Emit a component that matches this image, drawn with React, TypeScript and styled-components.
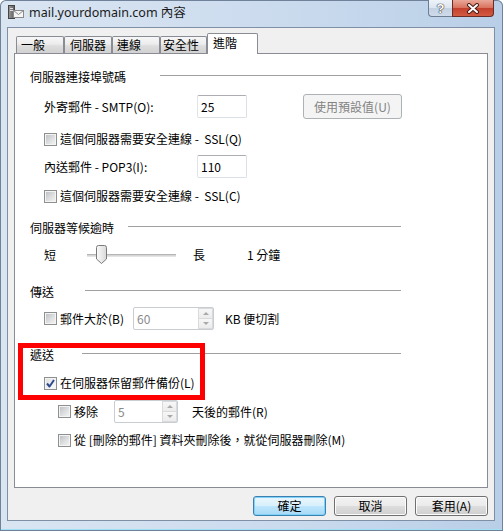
import React from "react";
import styled, { createGlobalStyle } from "styled-components";

const GlobalStyle = createGlobalStyle`
  html, body {
    margin: 0;
    padding: 0;
  }
  body {
    width: 503px;
    height: 531px;
    overflow: hidden;
    background: #fff;
    font-family: "Noto Sans CJK TC", "Noto Sans", sans-serif;
    font-size: 12px;
    color: #000;
  }
`;

const Window = styled.div`
  width: 503px;
  height: 531px;
  box-sizing: border-box;
  display: flex;
  flex-direction: column;
  padding: 0 8px 10px 7px;
  border-radius: 6px 6px 0 0;
  background: linear-gradient(to right, #dae5f2 0%, #cbdbee 55%, #b9cfe7 100%);
  box-shadow: inset 0 0 0 1px #6f829a, inset 0 -3px 0 -1px #9fe0f5;
`;

const TitleBar = styled.div`
  height: 27px;
  flex-shrink: 0;
  display: flex;
  align-items: flex-start;
`;

const TitleIcon = styled.div`
  width: 16px;
  height: 16px;
  margin: 4px 0 0 1px;
`;

const TitleText = styled.div`
  margin: 5px 0 0 5px;
  line-height: 16px;
  font-size: 12.5px;
  font-family: "Noto Sans", "Noto Sans CJK TC", sans-serif;
  color: #1a1a1a;
  white-space: nowrap;
`;

const CaptionButtons = styled.div`
  margin-left: auto;
  margin-right: 1px;
  display: flex;
`;

const HelpButton = styled.div`
  width: 24px;
  height: 17px;
  box-sizing: border-box;
  border: 1px solid #6d7d92;
  border-top: none;
  border-right: none;
  border-radius: 0 0 0 4px;
  background: linear-gradient(#eef3f9 0%, #dbe4ef 50%, #c3d1e2 52%, #cfdbea 100%);
  display: flex;
  align-items: center;
  justify-content: center;
  font-family: "Liberation Sans", sans-serif;
  font-weight: bold;
  font-size: 13px;
  color: #fff;
  text-shadow: 0 0 1px #333, 0 0 1px #333, 0 0 1px #333;
`;

const CloseButton = styled.div`
  width: 42px;
  height: 17px;
  box-sizing: border-box;
  border: 1px solid #6a2c24;
  border-top: none;
  border-radius: 0 0 4px 0;
  background: linear-gradient(#e9a899 0%, #d9735f 48%, #c3402c 52%, #d35b42 100%);
  display: flex;
  align-items: center;
  justify-content: center;
`;

const Client = styled.div`
  flex: 1;
  display: flex;
  flex-direction: column;
  background: #f0f0f0;
  border: 1px solid #7f90a6;
  padding: 5px 6px 0 6px;
`;

const TabStrip = styled.div`
  display: flex;
  align-items: flex-end;
  height: 21px;
  margin: 0 0 -1px 2px;
  position: relative;
  z-index: 2;
`;

const Tab = styled.div<{ $active?: boolean; $w: number; $pad: number }>`
  width: ${(p) => p.$w}px;
  box-sizing: border-box;
  height: ${(p) => (p.$active ? 21 : 17)}px;
  margin-bottom: ${(p) => (p.$active ? 0 : 1)}px;
  padding: 0 0 ${(p) => (p.$active ? 3 : 0)}px ${(p) => p.$pad}px;
  border: 1px solid #898c95;
  border-bottom: none;
  border-radius: 2px 2px 0 0;
  background: ${(p) =>
    p.$active
      ? "#fff"
      : "linear-gradient(#f7f7f7 0%, #ececec 45%, #dddddd 55%, #d2d2d2 100%)"};
  display: flex;
  align-items: center;
  line-height: 16px;
  white-space: nowrap;
`;

const Panel = styled.div`
  position: relative;
  z-index: 1;
  height: 435px;
  box-sizing: border-box;
  background: #fff;
  border: 1px solid #898c95;
  padding-left: 15px;
  display: flex;
  flex-direction: column;
`;

const GroupHeader = styled.div<{ $mt: number }>`
  display: flex;
  align-items: center;
  width: 371px;
  height: 16px;
  margin-top: ${(p) => p.$mt}px;
  flex-shrink: 0;
`;

const GroupLabel = styled.div<{ $w: number }>`
  width: ${(p) => p.$w}px;
  flex-shrink: 0;
  line-height: 16px;
  white-space: nowrap;
`;

const GroupLine = styled.div`
  flex: 1;
  height: 1px;
  margin-bottom: 4px;
  background: #a0a0a0;
`;

const Row = styled.div<{ $mt: number; $h: number; $indent: number }>`
  display: flex;
  align-items: center;
  height: ${(p) => p.$h}px;
  margin-top: ${(p) => p.$mt}px;
  margin-left: ${(p) => p.$indent}px;
  flex-shrink: 0;
`;

const FieldLabel = styled.div<{ $w?: number; $ml?: number }>`
  ${(p) => (p.$w ? `width: ${p.$w}px; flex-shrink: 0;` : "")}
  margin-left: ${(p) => p.$ml ?? 0}px;
  line-height: 16px;
  white-space: nowrap;
`;

const TextBox = styled.div<{ $w: number }>`
  width: ${(p) => p.$w}px;
  height: 23px;
  box-sizing: border-box;
  border: 1px solid #dbdfe6;
  border-top-color: #abadb3;
  border-left-color: #e2e3ea;
  border-radius: 2px;
  padding-left: 3px;
  display: flex;
  align-items: center;
  line-height: 16px;
  background: #fff;
`;

const DisabledButton = styled.div<{ $ml: number }>`
  margin-left: ${(p) => p.$ml}px;
  width: 99px;
  height: 25px;
  box-sizing: border-box;
  border: 1px solid #adb2b5;
  border-radius: 3px;
  background: #f4f4f4;
  color: #838383;
  display: flex;
  align-items: center;
  justify-content: center;
  line-height: 16px;
`;

const CheckBox = styled.div<{ $checked?: boolean }>`
  width: 13px;
  height: 13px;
  box-sizing: border-box;
  flex-shrink: 0;
  border: 1px solid #8e8f8f;
  box-shadow: inset 0 0 0 1px #f4f4f4;
  background: ${(p) =>
    p.$checked
      ? "linear-gradient(135deg, #dcdcdc 0%, #f2f2f2 60%, #fbfbfb 100%)"
      : "linear-gradient(135deg, #b9bcc0 0%, #dedfe0 55%, #f6f6f6 100%)"};
  display: flex;
  align-items: center;
  justify-content: center;
`;

const CheckText = styled.div<{ $w?: number }>`
  margin-left: 3px;
  ${(p) => (p.$w ? `width: ${p.$w}px; flex-shrink: 0;` : "")}
  line-height: 16px;
  white-space: nowrap;
`;

const SliderTrack = styled.div`
  position: relative;
  width: 89px;
  height: 3px;
  box-sizing: border-box;
  border-top: 1px solid #b5b5b5;
  border-bottom: 1px solid #e4e4e4;
  background: #d6d6d6;
  flex-shrink: 0;
`;

const SliderThumb = styled.svg`
  position: absolute;
  left: 9px;
  top: -10px;
`;

const SpinBox = styled.div<{ $w: number }>`
  width: ${(p) => p.$w}px;
  height: 23px;
  box-sizing: border-box;
  border: 1px solid #c9ccd1;
  border-radius: 2px;
  background: #fff;
  display: flex;
  align-items: stretch;
  flex-shrink: 0;
`;

const SpinValue = styled.div`
  flex: 1;
  padding-left: 3px;
  display: flex;
  align-items: center;
  color: #8a8a8a;
  line-height: 16px;
`;

const SpinButtons = styled.div`
  width: 15px;
  display: flex;
  flex-direction: column;
`;

const SpinHalf = styled.div<{ $down?: boolean }>`
  flex: 1;
  box-sizing: border-box;
  border: 1px solid #d9dadc;
  ${(p) => (p.$down ? "border-top: none;" : "")}
  background: linear-gradient(#f7f7f7, #ececec);
  display: flex;
  align-items: center;
  justify-content: center;
`;

const Arrow = styled.div<{ $down?: boolean }>`
  width: 0;
  height: 0;
  border-left: 3px solid transparent;
  border-right: 3px solid transparent;
  ${(p) =>
    p.$down ? "border-top: 3px solid #a9a9a9;" : "border-bottom: 3px solid #a9a9a9;"}
`;

const DeliverySection = styled.div`
  position: relative;
  display: flex;
  flex-direction: column;
`;

const Highlight = styled.div`
  position: absolute;
  left: -12px;
  top: 13px;
  width: 187px;
  height: 57px;
  box-sizing: border-box;
  border: 5px solid #ff0000;
  pointer-events: none;
`;

const ButtonRow = styled.div`
  display: flex;
  justify-content: flex-end;
  gap: 8px;
  margin-top: 8px;
`;

const DialogButton = styled.div<{ $primary?: boolean }>`
  width: 73px;
  height: 20px;
  box-sizing: border-box;
  border: 1px solid ${(p) => (p.$primary ? "#3c7fb1" : "#707070")};
  border-radius: 3px;
  background: ${(p) =>
    p.$primary
      ? "linear-gradient(#eaf6fd 0%, #d9f0fc 48%, #bee6fd 52%, #a7d9f5 100%)"
      : "linear-gradient(#f2f2f2 0%, #ebebeb 48%, #dddddd 52%, #cfcfcf 100%)"};
  box-shadow: ${(p) =>
    p.$primary ? "inset 0 0 0 1px #7fd2f8" : "inset 0 0 0 1px #fcfcfc"};
  display: flex;
  align-items: center;
  justify-content: center;
  line-height: 16px;
`;

const Check = () => (
  <svg width="9" height="9" viewBox="0 0 9 9">
    <path
      d="M1 4.5 L3.5 7.5 L8 1"
      fill="none"
      stroke="#2e4a8f"
      strokeWidth="2"
      strokeLinejoin="round"
    />
  </svg>
);

const Spinner = ({ value, w }: { value: string; w: number }) => (
  <SpinBox $w={w}>
    <SpinValue>{value}</SpinValue>
    <SpinButtons>
      <SpinHalf>
        <Arrow />
      </SpinHalf>
      <SpinHalf $down>
        <Arrow $down />
      </SpinHalf>
    </SpinButtons>
  </SpinBox>
);

const Header = ({ mt, w, children }: { mt: number; w: number; children: React.ReactNode }) => (
  <GroupHeader $mt={mt}>
    <GroupLabel $w={w}>{children}</GroupLabel>
    <GroupLine />
  </GroupHeader>
);

const tabs = [
  { label: "一般", w: 48, pad: 4 },
  { label: "伺服器", w: 48, pad: 5 },
  { label: "連線", w: 48, pad: 4 },
  { label: "安全性", w: 47, pad: 2 },
  { label: "進階", w: 51, pad: 5, active: true },
];

export default function App() {
  return (
    <>
      <GlobalStyle />
      <Window>
        <TitleBar>
          <TitleIcon>
            <svg width="16" height="16" viewBox="0 0 16 16">
              <defs>
                <linearGradient id="tower" x1="0" x2="1">
                  <stop offset="0" stopColor="#9a9a9a" />
                  <stop offset="1" stopColor="#5d5d5d" />
                </linearGradient>
              </defs>
              <rect x="0.5" y="1.5" width="6" height="13" fill="url(#tower)" stroke="#444" />
              <rect x="2" y="4" width="3" height="1" fill="#ddd" />
              <rect x="2" y="6" width="3" height="1" fill="#ddd" />
              <rect x="5.5" y="6.5" width="10" height="7" fill="#f6f6f6" stroke="#8a8a8a" />
              <path d="M5.5 6.5 L10.5 10.5 L15.5 6.5" fill="none" stroke="#8a8a8a" />
            </svg>
          </TitleIcon>
          <TitleText>mail.yourdomain.com 內容</TitleText>
          <CaptionButtons>
            <HelpButton>?</HelpButton>
            <CloseButton>
              <svg width="14" height="11" viewBox="0 0 14 11">
                <path d="M3 2 L11 9 M11 2 L3 9" stroke="#4a1c16" strokeWidth="4" strokeLinecap="round" />
                <path d="M3 2 L11 9 M11 2 L3 9" stroke="#fff" strokeWidth="2" strokeLinecap="round" />
              </svg>
            </CloseButton>
          </CaptionButtons>
        </TitleBar>
        <Client>
          <TabStrip>
            {tabs.map((t) => (
              <Tab key={t.label} $w={t.w} $pad={t.pad} $active={t.active}>
                {t.label}
              </Tab>
            ))}
          </TabStrip>
          <Panel>
            <Header mt={15} w={130}>伺服器連接埠號碼</Header>
            <Row $mt={9} $h={25} $indent={14}>
              <FieldLabel $w={153}>外寄郵件 - SMTP(O):</FieldLabel>
              <TextBox $w={50}>25</TextBox>
              <DisabledButton $ml={56}>使用預設值(U)</DisabledButton>
            </Row>
            <Row $mt={12} $h={16} $indent={14}>
              <CheckBox />
              <CheckText>這個伺服器需要安全連線 -&nbsp; SSL(Q)</CheckText>
            </Row>
            <Row $mt={8} $h={23} $indent={14}>
              <FieldLabel $w={153}>內送郵件 - POP3(I):</FieldLabel>
              <TextBox $w={50}>110</TextBox>
            </Row>
            <Row $mt={10} $h={16} $indent={14}>
              <CheckBox />
              <CheckText>這個伺服器需要安全連線 -&nbsp; SSL(C)</CheckText>
            </Row>

            <Header mt={16} w={98}>伺服器等候逾時</Header>
            <Row $mt={8} $h={22} $indent={14}>
              <FieldLabel $w={43}>短</FieldLabel>
              <SliderTrack>
                <SliderThumb width="11" height="19" viewBox="0 0 11 19">
                  <defs>
                    <linearGradient id="thumb" x1="0" x2="1">
                      <stop offset="0" stopColor="#fbfbfb" />
                      <stop offset="1" stopColor="#d9d9d9" />
                    </linearGradient>
                  </defs>
                  <path
                    d="M0.5 2.5 Q0.5 0.5 2.5 0.5 L8.5 0.5 Q10.5 0.5 10.5 2.5 L10.5 14 L5.5 18.5 L0.5 14 Z"
                    fill="url(#thumb)"
                    stroke="#7a7a7a"
                  />
                </SliderThumb>
              </SliderTrack>
              <FieldLabel $w={54} $ml={17}>長</FieldLabel>
              <FieldLabel>1 分鐘</FieldLabel>
            </Row>

            <Header mt={18} w={55}>傳送</Header>
            <Row $mt={7} $h={23} $indent={14}>
              <CheckBox />
              <CheckText $w={73}>郵件大於(B)</CheckText>
              <Spinner value="60" w={81} />
              <FieldLabel $ml={11}>KB 便切割</FieldLabel>
            </Row>

            <DeliverySection>
              <Header mt={17} w={52}>遞送</Header>
              <Row $mt={12} $h={16} $indent={14}>
                <CheckBox $checked>
                  <Check />
                </CheckBox>
                <CheckText>在伺服器保留郵件備份(L)</CheckText>
              </Row>
              <Highlight />
            </DeliverySection>
            <Row $mt={9} $h={23} $indent={28}>
              <CheckBox />
              <CheckText $w={40}>移除</CheckText>
              <Spinner value="5" w={64} />
              <FieldLabel $ml={14}>天後的郵件(R)</FieldLabel>
            </Row>
            <Row $mt={9} $h={16} $indent={28}>
              <CheckBox />
              <CheckText>從 [刪除的郵件] 資料夾刪除後，就從伺服器刪除(M)</CheckText>
            </Row>
          </Panel>
          <ButtonRow>
            <DialogButton $primary>確定</DialogButton>
            <DialogButton>取消</DialogButton>
            <DialogButton>套用(A)</DialogButton>
          </ButtonRow>
        </Client>
      </Window>
    </>
  );
}
